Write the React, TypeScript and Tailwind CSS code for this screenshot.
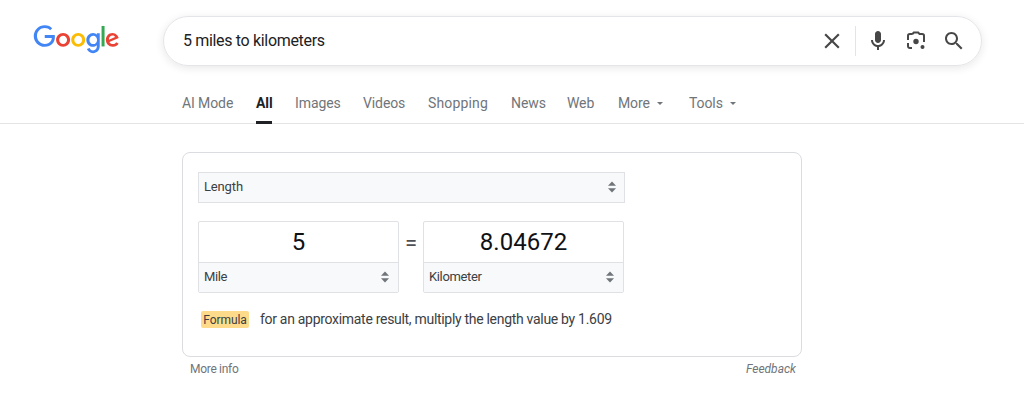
import React from 'react';

const tabs = [
  { label: 'AI Mode', width: 'w-[51px]' },
  { label: 'All', width: 'w-[16px]', active: true },
  { label: 'Images', width: 'w-[45px]' },
  { label: 'Videos', width: 'w-[42px]' },
  { label: 'Shopping', width: 'w-[60px]', wide: true },
  { label: 'News', width: 'w-[33px]' },
  { label: 'Web', width: 'w-[28px]' },
];

function GoogleLogo() {
  return (
    <svg viewBox="0 0 272 92" className="w-[87px] h-[29px] block">
      <path fill="#EA4335" d="M115.75 47.18c0 12.77-9.99 22.18-22.25 22.18s-22.25-9.41-22.25-22.18C71.25 34.32 81.24 25 93.5 25s22.25 9.32 22.25 22.18zm-9.74 0c0-7.98-5.79-13.44-12.51-13.44S80.99 39.2 80.99 47.18c0 7.9 5.79 13.44 12.51 13.44s12.51-5.55 12.51-13.44z" />
      <path fill="#FBBC05" d="M163.75 47.18c0 12.77-9.99 22.18-22.25 22.18s-22.25-9.41-22.25-22.18c0-12.85 9.99-22.18 22.25-22.18s22.25 9.32 22.25 22.18zm-9.74 0c0-7.98-5.79-13.44-12.51-13.44s-12.51 5.46-12.51 13.44c0 7.9 5.79 13.44 12.51 13.44s12.51-5.55 12.51-13.44z" />
      <path fill="#4285F4" d="M209.75 26.34v39.82c0 16.38-9.66 23.07-21.08 23.07-10.75 0-17.22-7.19-19.66-13.07l8.48-3.53c1.51 3.61 5.21 7.87 11.17 7.87 7.31 0 11.84-4.51 11.84-13v-3.19h-.34c-2.18 2.69-6.38 5.04-11.68 5.04-11.09 0-21.25-9.66-21.25-22.09 0-12.52 10.16-22.26 21.25-22.26 5.29 0 9.49 2.35 11.68 4.96h.34v-3.61h9.25zm-8.56 20.92c0-7.81-5.21-13.52-11.84-13.52-6.72 0-12.35 5.71-12.35 13.52 0 7.73 5.63 13.36 12.35 13.36 6.63 0 11.84-5.63 11.84-13.36z" />
      <path fill="#34A853" d="M225 3v65h-9.5V3h9.5z" />
      <path fill="#EA4335" d="M262.02 54.48l7.56 5.04c-2.44 3.61-8.32 9.83-18.48 9.83-12.6 0-22.01-9.74-22.01-22.18 0-13.19 9.49-22.18 20.92-22.18 11.51 0 17.14 9.16 18.98 14.11l1.01 2.52-29.65 12.28c2.27 4.45 5.8 6.72 10.75 6.72 4.96 0 8.4-2.44 10.92-6.14zm-23.27-7.98l19.82-8.23c-1.09-2.77-4.37-4.7-8.23-4.7-4.95 0-11.84 4.37-11.59 12.93z" />
      <path fill="#4285F4" d="M35.29 41.41V32H67c.31 1.64.47 3.58.47 5.68 0 7.06-1.93 15.79-8.15 22.01-6.05 6.3-13.78 9.66-24.02 9.66C16.32 69.35.36 53.89.36 34.91.36 15.93 16.32.47 35.3.47c10.5 0 17.98 4.12 23.6 9.49l-6.64 6.64c-4.03-3.78-9.49-6.72-16.97-6.72-13.86 0-24.7 11.17-24.7 25.03 0 13.86 10.84 25.03 24.7 25.03 8.99 0 14.11-3.61 17.39-6.89 2.66-2.66 4.41-6.46 5.1-11.65l-22.49.01z" />
    </svg>
  );
}

function Icon({ d, className }: { d: string; className?: string }) {
  return (
    <svg viewBox="0 0 24 24" className={className} fill="currentColor">
      <path d={d} />
    </svg>
  );
}

function LensIcon() {
  return (
    <svg viewBox="0 0 24 24" className="w-[24px] h-[24px] text-[#474747]" fill="none">
      <path d="M8.5 5 9.8 3.6h4.4L15.5 5h2.7A1.8 1.8 0 0 1 20 6.8V13M4 11V6.8A1.8 1.8 0 0 1 5.8 5h2.7M4 14v3.2A1.8 1.8 0 0 0 5.8 19H8" stroke="currentColor" strokeWidth="2" />
      <circle cx="12" cy="12.5" r="2.7" fill="currentColor" />
      <circle cx="18.5" cy="18" r="2" fill="currentColor" />
    </svg>
  );
}

// up and down carets of the native-looking selects
function SelectArrows() {
  return (
    <svg viewBox="0 0 8 12" className="w-[8px] h-[12px] text-[#70757a]" fill="currentColor">
      <path d="M4 0.5 8 4.8H0z" />
      <path d="M4 11.5 0 7.2h8z" />
    </svg>
  );
}

function Caret() {
  return <span className="ml-[7.5px] mt-[1px] w-0 h-0 border-x-[3px] border-x-transparent border-t-[3px] border-t-[#70757a]" />;
}

function UnitBox({ value, unit }: { value: string; unit: string }) {
  return (
    <div className="w-[201px] h-[72px] rounded-[2px] border border-[#dfe1e5] overflow-hidden flex flex-col">
      <div className="h-[41px] flex items-center justify-center text-[24px] text-[#101114] border-b border-[#dfe1e5]">
        {value}
      </div>
      <div className="flex-1 bg-[#f8f9fa] pl-[5px] pr-[9px] pb-[2px] flex items-center justify-between text-[13px] tracking-[-0.35px] text-[#3c4043]">
        <span>{unit}</span>
        <SelectArrows />
      </div>
    </div>
  );
}

export default function App() {
  return (
    <main className="w-[1024px] h-[403px] overflow-hidden bg-white font-['Roboto',sans-serif]">
      <header className="h-[124px] border-b border-[#e3e4e6]">
        <div className="flex pt-[16px] pl-[33px]">
          <div className="w-[130px] pt-[9px]">
            <GoogleLogo />
          </div>
          <div className="w-[819px] h-[50px] rounded-full border border-[#e4e5e8] shadow-[0_2px_8px_rgba(32,33,36,0.1)] flex items-center pl-[19px] pr-[15px]">
            <span className="flex-1 text-[16px] tracking-[-0.33px] text-[#202124]">5 miles to kilometers</span>
            <Icon
              className="w-[26px] h-[26px] text-[#474747]"
              d="M19 6.41L17.59 5 12 10.59 6.41 5 5 6.41 10.59 12 5 17.59 6.41 19 12 13.41 17.59 19 19 17.59 13.41 12z"
            />
            <div className="w-px h-[30px] bg-[#e3e4e6] ml-[10px] mr-[10px]" />
            <Icon
              className="w-[24px] h-[24px] text-[#474747] mr-[14px]"
              d="M12 14c1.66 0 3-1.34 3-3V5c0-1.66-1.34-3-3-3S9 3.34 9 5v6c0 1.66 1.34 3 3 3z M17 11c0 2.76-2.24 5-5 5s-5-2.24-5-5H5c0 3.53 2.61 6.43 6 6.92V21h2v-3.08c3.39-.49 6-3.39 6-6.92h-2z"
            />
            <LensIcon />
            <Icon
              className="w-[24px] h-[24px] text-[#474747] ml-[14px]"
              d="M15.5 14h-.79l-.28-.27C15.41 12.59 16 11.11 16 9.5 16 5.91 13.09 3 9.5 3S3 5.91 3 9.5 5.91 16 9.5 16c1.61 0 3.09-.59 4.23-1.57l.27.28v.79l5 4.99L20.49 19l-4.99-5zm-6 0C7.01 14 5 11.99 5 9.5S7.01 5 9.5 5 14 7.01 14 9.5 11.99 14 9.5 14z"
            />
          </div>
        </div>
        <nav className="flex pl-[182px] mt-[17px] gap-[23px] text-[14px] tracking-[-0.1px] text-[#70757a]">
          {tabs.map((tab) => (
            <div
              key={tab.label}
              className={`${tab.width} h-[41px] pt-[10px] whitespace-nowrap leading-[20px] ${
                tab.active ? 'text-[#202124] font-bold border-b-[3px] border-[#202124]' : ''
              } ${tab.wide ? 'tracking-[0.15px]' : ''}`}
            >
              {tab.label}
            </div>
          ))}
          <div className="w-[48px] h-[41px] pt-[10px] leading-[20px] flex items-start">
            <span>More</span>
            <span className="h-[20px] flex items-center"><Caret /></span>
          </div>
          <div className="h-[41px] pt-[10px] leading-[20px] flex items-start">
            <span>Tools</span>
            <span className="h-[20px] flex items-center"><Caret /></span>
          </div>
        </nav>
      </header>

      <section className="w-[620px] ml-[182px] mt-[28px]">
        <div className="h-[205px] rounded-[8px] border border-[#dadce0] pt-[19px] pl-[15px]">
          <div className="w-[427px] h-[31px] border border-[#dfe1e5] bg-[#f8f9fa] pl-[5px] pr-[8px] pb-[2px] flex items-center justify-between text-[13px] tracking-[-0.15px] text-[#3c4043]">
            <span>Length</span>
            <SelectArrows />
          </div>
          <div className="flex mt-[18px]">
            <UnitBox value="5" unit="Mile" />
            <div className="w-[24px] h-[41px] pt-[1px] flex items-center justify-center text-[22px] text-[#4d5156]">=</div>
            <UnitBox value="8.04672" unit="Kilometer" />
          </div>
          <div className="flex items-center mt-[16px] ml-[3px]">
            <span className="w-[48px] h-[17px] rounded-[2px] bg-[#fedb8a] flex items-center justify-center text-[12px] tracking-[-0.1px] text-[#3c4043]">
              Formula
            </span>
            <span className="ml-[11px] text-[14px] tracking-[-0.3px] text-[#3c4043]">for an approximate result, multiply the length value by 1.609</span>
          </div>
        </div>
        <div className="flex justify-between pl-[8px] pr-[6px] mt-[4px] text-[12px] leading-[16px] text-[#70757a]">
          <span className="tracking-[-0.3px]">More info</span>
          <span className="italic">Feedback</span>
        </div>
      </section>
    </main>
  );
}
